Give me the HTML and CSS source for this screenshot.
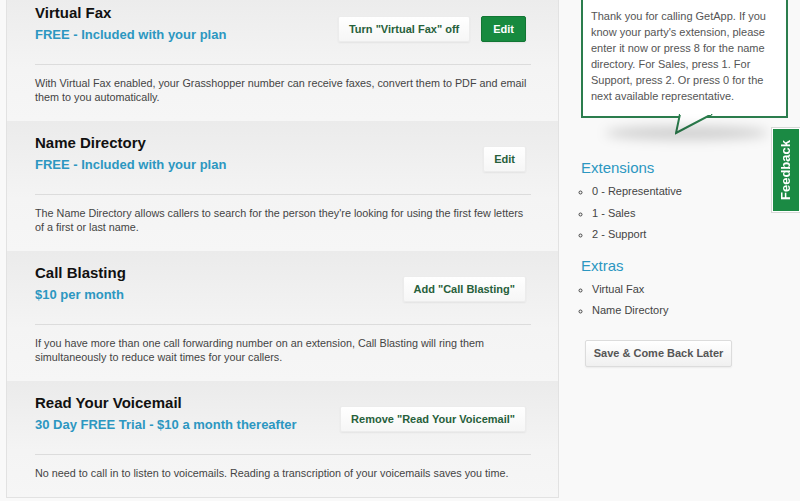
FILE: index.html
```html
<!DOCTYPE html>
<html lang="en">
<head>
  <meta charset="UTF-8">
  <title>Extras</title>
  <link rel="stylesheet" href="styles.css">
</head>
<body>
  <div class="page">
    <div class="features">

      <div class="feature">
        <div class="feature-head">
          <div>
            <h3>Virtual Fax</h3>
            <div class="price">FREE - Included with your plan</div>
          </div>
          <div class="actions">
            <button class="btn">Turn "Virtual Fax" off</button>
            <button class="btn btn-green">Edit</button>
          </div>
        </div>
        <p>With Virtual Fax enabled, your Grasshopper number can receive faxes, convert them to PDF and email them to you automatically.</p>
      </div>

      <div class="feature">
        <div class="feature-head">
          <div>
            <h3>Name Directory</h3>
            <div class="price">FREE - Included with your plan</div>
          </div>
          <div class="actions">
            <button class="btn">Edit</button>
          </div>
        </div>
        <p>The Name Directory allows callers to search for the person they're looking for using the first few letters of a first or last name.</p>
      </div>

      <div class="feature">
        <div class="feature-head">
          <div>
            <h3>Call Blasting</h3>
            <div class="price">$10 per month</div>
          </div>
          <div class="actions">
            <button class="btn">Add "Call Blasting"</button>
          </div>
        </div>
        <p>If you have more than one call forwarding number on an extension, Call Blasting will ring them simultaneously to reduce wait times for your callers.</p>
      </div>

      <div class="feature">
        <div class="feature-head">
          <div>
            <h3>Read Your Voicemail</h3>
            <div class="price">30 Day FREE Trial - $10 a month thereafter</div>
          </div>
          <div class="actions">
            <button class="btn">Remove "Read Your Voicemail"</button>
          </div>
        </div>
        <p>No need to call in to listen to voicemails. Reading a transcription of your voicemails saves you time.</p>
      </div>

    </div>

    <div class="sidebar">
      <div class="bubble">
        Thank you for calling GetApp. If you know your party's extension, please enter it now or press 8 for the name directory. For Sales, press 1. For Support, press 2. Or press 0 for the next available representative.
        <svg class="tail" width="40" height="22" viewBox="0 0 40 22">
          <polygon points="5,0 1,19 37,0" fill="#fff" stroke="#2b7d4d" stroke-width="2"/>
          <rect x="5" y="-2" width="31" height="3" fill="#fff"/>
        </svg>
      </div>
      <div class="bubble-shadow"></div>

      <h4>Extensions</h4>
      <ul>
        <li>0 - Representative</li>
        <li>1 - Sales</li>
        <li>2 - Support</li>
      </ul>

      <h4>Extras</h4>
      <ul>
        <li>Virtual Fax</li>
        <li>Name Directory</li>
      </ul>

      <button class="btn btn-gray">Save &amp; Come Back Later</button>
    </div>
  </div>

  <div class="feedback">Feedback</div>
</body>
</html>
```

FILE: styles.css
```css
body {
  font-family: 'Liberation Sans', Arial, sans-serif;
  background: #f9f9f9;
  color: #444;
  margin: 0;
  padding: 0;
  overflow: hidden;
}
.page {
  display: flex;
  align-items: flex-start;
}
.features {
  width: 551px;
  margin: -10px 0 0 6px;
  border: 1px solid #e2e2e2;
  background: #f5f5f5;
}
.feature {
  height: 130px;
  box-sizing: border-box;
  padding: 11px 27px 0 28px;
  background: linear-gradient(#ebebeb, #f4f4f4 60%, #f6f6f6);
}
.feature:last-child {
  height: 116px;
}
.feature-head {
  display: flex;
  justify-content: space-between;
  align-items: flex-start;
  padding-bottom: 18px;
  border-bottom: 1px solid #dcdcdc;
}
h3 {
  margin: 0;
  font-size: 15px;
  line-height: 22px;
  color: #111;
}
.price {
  font-size: 13px;
  line-height: 22px;
  font-weight: bold;
  color: #2c97c1;
}
.actions {
  display: flex;
  gap: 11px;
  margin-top: 14px;
  margin-right: 5px;
}
.btn {
  font-family: inherit;
  height: 26px;
  padding: 0 10px;
  font-size: 11px;
  font-weight: bold;
  color: #27603a;
  background: linear-gradient(#ffffff, #f6f6f6);
  border: 1px solid #ececec;
  border-radius: 2px;
  box-shadow: 0 1px 2px rgba(0, 0, 0, 0.06);
}
.btn-green {
  color: #fff;
  background: #178a3f;
  border-color: #127634;
  padding: 0 11px;
}
.feature p {
  margin: 0;
  padding-top: 11px;
  font-size: 10.8px;
  line-height: 14px;
  color: #444;
}

.sidebar {
  width: 210px;
  margin: -4px 0 0 22px;
}
.bubble {
  position: relative;
  padding: 10px 8px 12px 8px;
  background: #fff;
  border: 2px solid #2b7d4d;
  font-size: 11px;
  line-height: 16px;
  color: #555;
  width: 187px;
}
.tail {
  position: absolute;
  left: 92px;
  bottom: -20px;
}
.bubble-shadow {
  height: 14px;
  margin: 8px 22px 18px 24px;
  border-radius: 50%;
  background: rgba(0, 0, 0, 0.16);
  filter: blur(6px);
}
h4 {
  margin: 10px 0 0;
  font-size: 15px;
  line-height: 20px;
  font-weight: normal;
  color: #2c97c1;
}
ul {
  margin: 3px 0 0;
  padding-left: 11px;
  list-style: circle;
  font-size: 11px;
  line-height: 21.5px;
  color: #444;
}
.btn-gray {
  margin: 18px 0 0 4px;
  width: 147px;
  height: 27px;
  padding: 0;
  color: #555;
  border-color: #dcdcdc;
  background: linear-gradient(#ffffff, #f0f0f0);
}

.feedback {
  position: absolute;
  left: 772px;
  top: 128px;
  width: 26px;
  height: 82px;
  background: #1b8a44;
  border: 1px solid #fff;
  box-shadow: 0 0 0 1px #d8d8d8;
  color: #fff;
  font-size: 13px;
  font-weight: bold;
  writing-mode: vertical-rl;
  transform: rotate(180deg);
  text-align: center;
  line-height: 26px;
}
```
